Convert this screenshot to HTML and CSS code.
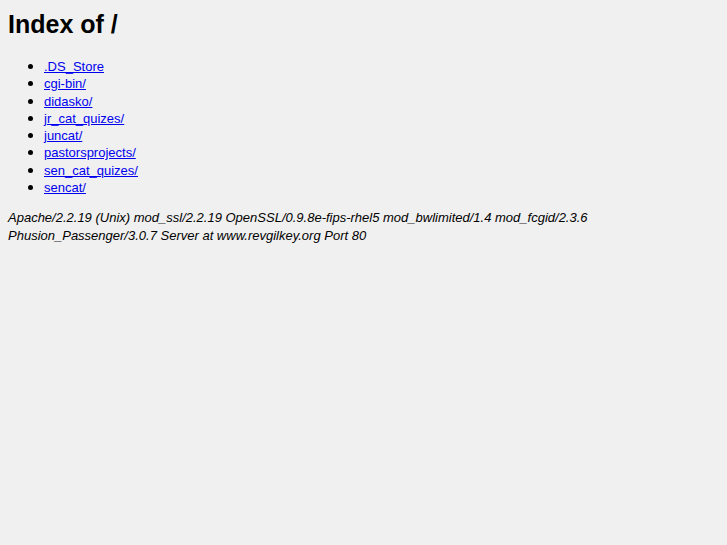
FILE: index.html
```html
<!DOCTYPE html>
<html>
<head>
<meta charset="utf-8">
<title>Index of /</title>
<link rel="stylesheet" href="styles.css">
</head>
<body>
<h1 class="title">Index of /</h1>
<ul class="listing">
<li><a href=".DS_Store">.DS_Store</a></li>
<li><a href="cgi-bin/">cgi-bin/</a></li>
<li><a href="didasko/">didasko/</a></li>
<li><a href="jr_cat_quizes/">jr_cat_quizes/</a></li>
<li><a href="juncat/">juncat/</a></li>
<li><a href="pastorsprojects/">pastorsprojects/</a></li>
<li><a href="sen_cat_quizes/">sen_cat_quizes/</a></li>
<li><a href="sencat/">sencat/</a></li>
</ul>
<address class="sig">Apache/2.2.19 (Unix) mod_ssl/2.2.19 OpenSSL/0.9.8e-fips-rhel5 mod_bwlimited/1.4 mod_fcgid/2.3.6 Phusion_Passenger/3.0.7 Server at www.revgilkey.org Port 80</address>
</body>
</html>
```
FILE: styles.css
```css
html { background: #f0f0f0; }
body {
  margin: 0;
  padding: 0 8px;
  font-family: "Liberation Sans", Arial, sans-serif;
  font-size: 13px;
  color: #000;
}
.title {
  margin: 9px 0 0;
  font-size: 25px;
  line-height: 30px;
  font-weight: bold;
}
.listing {
  margin: 19px 0 0;
  padding-left: 36px;
  line-height: 17.3px;
  list-style: none;
}
.listing li::before {
  content: "";
  display: inline-block;
  width: 5px;
  height: 5px;
  border-radius: 50%;
  background: #000;
  margin-left: -16px;
  margin-right: 11px;
  vertical-align: 2px;
}
.listing a { color: #0000ee; }
.sig {
  margin-top: 13px;
  font-style: italic;
  line-height: 18px;
}
```
